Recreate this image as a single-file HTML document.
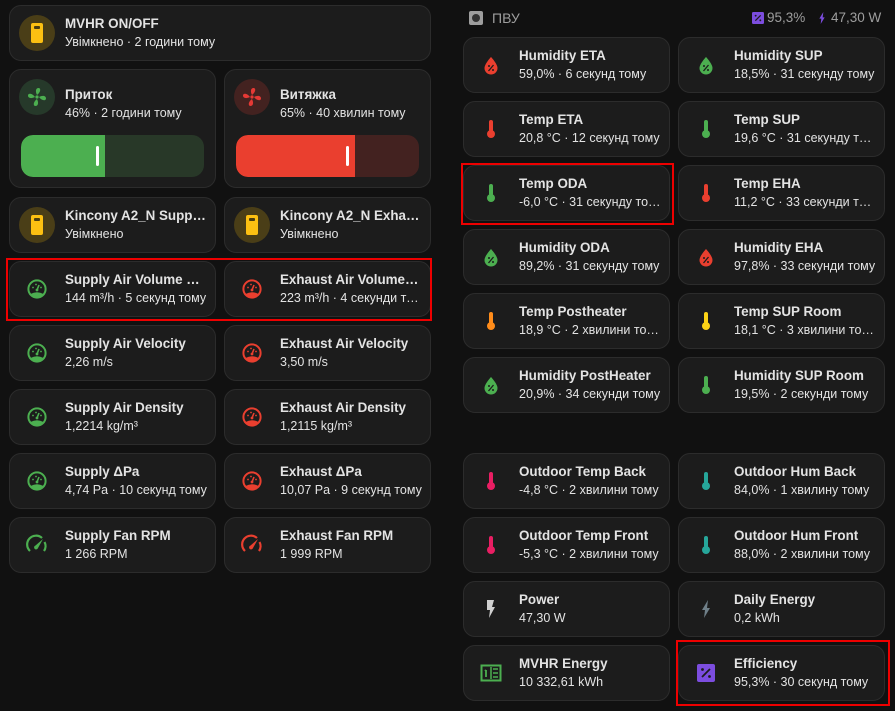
<!DOCTYPE html>
<html><head><meta charset="utf-8"><style>
body{margin:0;width:895px;height:711px;background:#111;font-family:"Liberation Sans",sans-serif;overflow:hidden;position:relative}
.c{position:absolute;width:207px;height:56px;background:#1c1c1c;border:1px solid #2c2c2c;border-radius:12px;box-sizing:border-box}
.c svg.i{position:absolute;left:15px;top:15px;width:24px;height:24px}
.t{position:absolute;left:55px;top:10px;right:8px;font-size:13.4px;font-weight:bold;color:#e3e3e3;white-space:nowrap;overflow:hidden;text-overflow:ellipsis}
.s{position:absolute;left:55px;top:29px;right:8px;font-size:12.5px;color:#e3e3e3;white-space:nowrap;overflow:hidden;text-overflow:ellipsis}
.bg{position:absolute;left:9px;top:9px;width:36px;height:36px;border-radius:50%}
.bg svg{position:absolute;left:6px;top:6px;width:24px;height:24px}
.red{position:absolute;border:2px solid #e00;box-sizing:border-box}
</style></head><body>
<svg width="0" height="0" style="position:absolute">
<defs>
<symbol id="sw" viewBox="0 0 24 24"><rect x="6" y="2" width="12" height="20" rx="2" fill="#fcc012"/><rect x="9" y="5" width="6" height="3" rx="1" fill="#4a3d10"/></symbol>
<symbol id="gauge" viewBox="0 0 24 24"><circle cx="12" cy="12" r="8.6" fill="none" stroke="currentColor" stroke-width="2"/><path d="M5.5 17 Q12 13.5 18.5 17 L16.5 20 H7.5Z" fill="currentColor"/><path d="M12 13 L14 8" stroke="currentColor" stroke-width="1.6"/><circle cx="12" cy="13" r="1.4" fill="currentColor"/><circle cx="8" cy="10.5" r="0.9" fill="currentColor"/><circle cx="16" cy="10.5" r="0.9" fill="currentColor"/><circle cx="11" cy="7.5" r="0.9" fill="currentColor"/></symbol>
<symbol id="rpm" viewBox="0 0 24 24"><path d="M5 18 A8.5 8.5 0 0 1 17 5" fill="none" stroke="currentColor" stroke-width="2.2"/><path d="M19.5 9 A8.5 8.5 0 0 1 19 18" fill="none" stroke="currentColor" stroke-width="2.2"/><path d="M18 6 L13 15 A2 2 0 1 1 10.5 12.5Z" fill="currentColor"/></symbol>
<symbol id="therm" viewBox="0 0 24 24"><rect x="10" y="3" width="4" height="12" rx="2" fill="currentColor"/><circle cx="12" cy="17" r="4" fill="currentColor"/></symbol>
<symbol id="drop" viewBox="0 0 24 24"><path d="M12 4 C12 4 5.5 11 5.5 15 A6.5 6.5 0 0 0 18.5 15 C18.5 11 12 4 12 4Z" fill="currentColor"/><path d="M9.5 18 L14.5 12" stroke="#1c1c1c" stroke-width="1.3"/><circle cx="10" cy="13" r="1" fill="#1c1c1c"/><circle cx="14" cy="17" r="1" fill="#1c1c1c"/></symbol>
<symbol id="fan" viewBox="0 0 24 24"><circle cx="12" cy="12" r="1.6" fill="currentColor"/><path d="M12 10 C10 6 11 3 13.5 3 C16 3 16 7 12 10Z M14 12 C18 10 21 11 21 13.5 C21 16 17 16 14 12Z M12 14 C14 18 13 21 10.5 21 C8 21 8 17 12 14Z M10 12 C6 14 3 13 3 10.5 C3 8 7 8 10 12Z" fill="currentColor"/></symbol>
<symbol id="bolt" viewBox="0 0 24 24"><path d="M8 3 H15 L13 10 H16 L10 21 L11 13 H8Z" fill="currentColor"/></symbol>
<symbol id="bolt2" viewBox="0 0 24 24"><path d="M14 3 L8 13 H11 L10 21 L16 11 H13Z" fill="currentColor"/></symbol>
<symbol id="pct" viewBox="0 0 24 24"><rect x="3" y="3" width="18" height="18" rx="2" fill="#7c4ddf"/><path d="M8 16 L16 8" stroke="#1c1c1c" stroke-width="1.8"/><circle cx="8.5" cy="8.5" r="1.4" fill="#1c1c1c"/><circle cx="15.5" cy="15.5" r="1.4" fill="#1c1c1c"/></symbol>
<symbol id="meter" viewBox="0 0 24 24"><rect x="2.5" y="4.5" width="19" height="15" fill="none" stroke="currentColor" stroke-width="2"/><path d="M7 9 V16 M6 10 L7 9" stroke="currentColor" stroke-width="1.8" fill="none"/><path d="M12 6 V18" stroke="currentColor" stroke-width="1.5"/><path d="M14 8 H19 M14 12 H19 M14 16 H19" stroke="currentColor" stroke-width="1.5"/></symbol>
</defs></svg>

<div class="c" style="left:9px;top:5px;width:422px;height:56px"><div class="bg" style="background:#4a3e17"><svg><use href="#sw"/></svg></div><div class="t">MVHR ON/OFF</div><div class="s">Увімкнено · 2 години тому</div></div>

<div class="c" style="left:9px;top:69px;height:119px"><div class="bg" style="background:#26392a;color:#4caf50"><svg><use href="#fan"/></svg></div><div class="t" style="top:17px">Приток</div><div class="s" style="top:36px">46% · 2 години тому</div>
<div style="position:absolute;left:11px;top:65px;width:183px;height:42px;border-radius:12px;background:#283828;overflow:hidden"><div style="width:84px;height:42px;background:#4caf50;border-radius:12px 0 0 12px"></div><div style="position:absolute;left:75px;top:11px;width:3px;height:20px;background:#fff;border-radius:2px"></div></div></div>

<div class="c" style="left:224px;top:69px;height:119px"><div class="bg" style="background:#432220;color:#e53935"><svg><use href="#fan"/></svg></div><div class="t" style="top:17px">Витяжка</div><div class="s" style="top:36px">65% · 40 хвилин тому</div>
<div style="position:absolute;left:11px;top:65px;width:183px;height:42px;border-radius:12px;background:#432220;overflow:hidden"><div style="width:119px;height:42px;background:#ea3f2f;border-radius:12px 0 0 12px"></div><div style="position:absolute;left:110px;top:11px;width:3px;height:20px;background:#fff;border-radius:2px"></div></div></div>

<div class="c" style="left:9px;top:197px"><div class="bg" style="background:#4a3e17"><svg><use href="#sw"/></svg></div><div class="t">Kincony A2_N Supply Fan</div><div class="s">Увімкнено</div></div>
<div class="c" style="left:224px;top:197px"><div class="bg" style="background:#4a3e17"><svg><use href="#sw"/></svg></div><div class="t">Kincony A2_N Exhaust Fan</div><div class="s">Увімкнено</div></div>

<div class="c" style="left:9px;top:261px"><svg class="i" style="color:#4caf50"><use href="#gauge"/></svg><div class="t">Supply Air Volume Flow</div><div class="s">144 m³/h · 5 секунд тому</div></div>
<div class="c" style="left:224px;top:261px"><svg class="i" style="color:#ea3f2f"><use href="#gauge"/></svg><div class="t">Exhaust Air Volume Flow</div><div class="s">223 m³/h · 4 секунди тому</div></div>
<div class="red" style="left:6px;top:258px;width:426px;height:63px"></div>

<div class="c" style="left:9px;top:325px"><svg class="i" style="color:#4caf50"><use href="#gauge"/></svg><div class="t">Supply Air Velocity</div><div class="s">2,26 m/s</div></div>
<div class="c" style="left:224px;top:325px"><svg class="i" style="color:#ea3f2f"><use href="#gauge"/></svg><div class="t">Exhaust Air Velocity</div><div class="s">3,50 m/s</div></div>
<div class="c" style="left:9px;top:389px"><svg class="i" style="color:#4caf50"><use href="#gauge"/></svg><div class="t">Supply Air Density</div><div class="s">1,2214 kg/m³</div></div>
<div class="c" style="left:224px;top:389px"><svg class="i" style="color:#ea3f2f"><use href="#gauge"/></svg><div class="t">Exhaust Air Density</div><div class="s">1,2115 kg/m³</div></div>
<div class="c" style="left:9px;top:453px"><svg class="i" style="color:#4caf50"><use href="#gauge"/></svg><div class="t">Supply ΔPa</div><div class="s">4,74 Pa · 10 секунд тому</div></div>
<div class="c" style="left:224px;top:453px"><svg class="i" style="color:#ea3f2f"><use href="#gauge"/></svg><div class="t">Exhaust ΔPa</div><div class="s">10,07 Pa · 9 секунд тому</div></div>
<div class="c" style="left:9px;top:517px"><svg class="i" style="color:#4caf50"><use href="#rpm"/></svg><div class="t">Supply Fan RPM</div><div class="s">1 266 RPM</div></div>
<div class="c" style="left:224px;top:517px"><svg class="i" style="color:#ea3f2f"><use href="#rpm"/></svg><div class="t">Exhaust Fan RPM</div><div class="s">1 999 RPM</div></div>

<div style="position:absolute;left:469px;top:11px;width:14px;height:14px;background:#9e9e9e;border-radius:2px"><div style="position:absolute;left:3px;top:3px;width:8px;height:8px;border-radius:50%;background:#333"></div></div>
<div style="position:absolute;left:492px;top:10px;font-size:14px;color:#9e9e9e">ПВУ</div>
<svg style="position:absolute;left:750px;top:10px;width:16px;height:16px"><use href="#pct"/></svg>
<div style="position:absolute;left:767px;top:10px;font-size:13.5px;color:#9e9e9e">95,3%</div>
<svg style="position:absolute;left:814px;top:10px;width:16px;height:16px;color:#7c4ddf"><use href="#bolt2"/></svg>
<div style="position:absolute;left:831px;top:10px;font-size:13.5px;color:#9e9e9e">47,30 W</div>

<div class="c" style="left:463px;top:37px"><svg class="i" style="color:#ea3f2f"><use href="#drop"/></svg><div class="t">Humidity ETA</div><div class="s">59,0% · 6 секунд тому</div></div>
<div class="c" style="left:678px;top:37px"><svg class="i" style="color:#4caf50"><use href="#drop"/></svg><div class="t">Humidity SUP</div><div class="s">18,5% · 31 секунду тому</div></div>
<div class="c" style="left:463px;top:101px"><svg class="i" style="color:#ea3f2f"><use href="#therm"/></svg><div class="t">Temp ETA</div><div class="s">20,8 °C · 12 секунд тому</div></div>
<div class="c" style="left:678px;top:101px"><svg class="i" style="color:#4caf50"><use href="#therm"/></svg><div class="t">Temp SUP</div><div class="s">19,6 °C · 31 секунду тому</div></div>
<div class="c" style="left:463px;top:165px"><svg class="i" style="color:#4caf50"><use href="#therm"/></svg><div class="t">Temp ODA</div><div class="s">-6,0 °C · 31 секунду тому</div></div>
<div class="red" style="left:461px;top:163px;width:213px;height:62px"></div>
<div class="c" style="left:678px;top:165px"><svg class="i" style="color:#ea3f2f"><use href="#therm"/></svg><div class="t">Temp EHA</div><div class="s">11,2 °C · 33 секунди тому</div></div>
<div class="c" style="left:463px;top:229px"><svg class="i" style="color:#4caf50"><use href="#drop"/></svg><div class="t">Humidity ODA</div><div class="s">89,2% · 31 секунду тому</div></div>
<div class="c" style="left:678px;top:229px"><svg class="i" style="color:#ea3f2f"><use href="#drop"/></svg><div class="t">Humidity EHA</div><div class="s">97,8% · 33 секунди тому</div></div>
<div class="c" style="left:463px;top:293px"><svg class="i" style="color:#ff8c1a"><use href="#therm"/></svg><div class="t">Temp Postheater</div><div class="s">18,9 °C · 2 хвилини тому</div></div>
<div class="c" style="left:678px;top:293px"><svg class="i" style="color:#fcd316"><use href="#therm"/></svg><div class="t">Temp SUP Room</div><div class="s">18,1 °C · 3 хвилини тому</div></div>
<div class="c" style="left:463px;top:357px"><svg class="i" style="color:#4caf50"><use href="#drop"/></svg><div class="t">Humidity PostHeater</div><div class="s">20,9% · 34 секунди тому</div></div>
<div class="c" style="left:678px;top:357px"><svg class="i" style="color:#4caf50"><use href="#therm"/></svg><div class="t">Humidity SUP Room</div><div class="s">19,5% · 2 секунди тому</div></div>

<div class="c" style="left:463px;top:453px"><svg class="i" style="color:#e91e63"><use href="#therm"/></svg><div class="t">Outdoor Temp Back</div><div class="s">-4,8 °C · 2 хвилини тому</div></div>
<div class="c" style="left:678px;top:453px"><svg class="i" style="color:#26a69a"><use href="#therm"/></svg><div class="t">Outdoor Hum Back</div><div class="s">84,0% · 1 хвилину тому</div></div>
<div class="c" style="left:463px;top:517px"><svg class="i" style="color:#e91e63"><use href="#therm"/></svg><div class="t">Outdoor Temp Front</div><div class="s">-5,3 °C · 2 хвилини тому</div></div>
<div class="c" style="left:678px;top:517px"><svg class="i" style="color:#26a69a"><use href="#therm"/></svg><div class="t">Outdoor Hum Front</div><div class="s">88,0% · 2 хвилини тому</div></div>
<div class="c" style="left:463px;top:581px"><svg class="i" style="color:#d0d0d0"><use href="#bolt"/></svg><div class="t">Power</div><div class="s">47,30 W</div></div>
<div class="c" style="left:678px;top:581px"><svg class="i" style="color:#6f7f88"><use href="#bolt2"/></svg><div class="t">Daily Energy</div><div class="s">0,2 kWh</div></div>
<div class="c" style="left:463px;top:645px"><svg class="i" style="color:#4caf50"><use href="#meter"/></svg><div class="t">MVHR Energy</div><div class="s">10 332,61 kWh</div></div>
<div class="c" style="left:678px;top:645px"><svg class="i"><use href="#pct"/></svg><div class="t">Efficiency</div><div class="s">95,3% · 30 секунд тому</div></div>
<div class="red" style="left:676px;top:640px;width:214px;height:66px"></div>
</body></html>
